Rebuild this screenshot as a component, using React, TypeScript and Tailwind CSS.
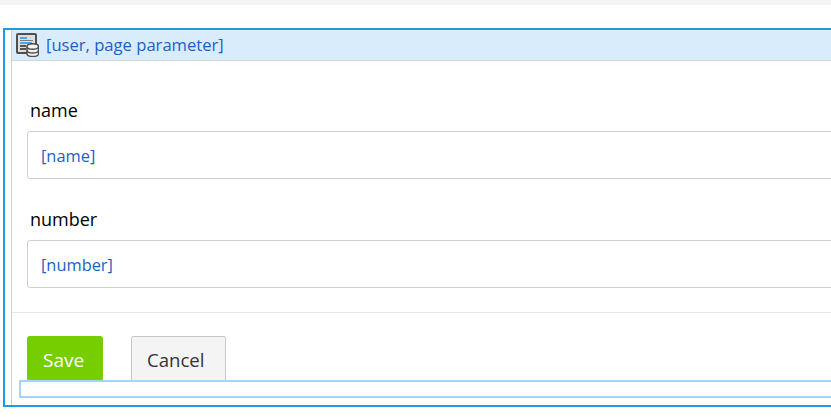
const font = "font-['Open_Sans','Noto_Sans',sans-serif]";

function FormIcon() {
  return (
    <svg width="23" height="24" viewBox="0 0 23 24" className="shrink-0">
      <rect x="1" y="1" width="19" height="19" rx="1" fill="#dedede" stroke="#505050" strokeWidth="2" />
      <rect x="4" y="4" width="7" height="2" fill="#4aa8ee" />
      <rect x="4" y="7" width="13" height="1" fill="#7d7d7d" />
      <rect x="4" y="9" width="12" height="2" fill="#4aa8ee" />
      <rect x="4" y="12" width="6" height="2" fill="#555" />
      <rect x="4" y="15" width="6" height="2" fill="#555" />
      <path d="M11 13.500c0-1.600 2.500-2.800 5.750-2.800s5.750 1.200 5.750 2.800v7.200c0 1.600-2.500 2.800-5.750 2.800s-5.750-1.200-5.750-2.800z" fill="#f4f4f4" stroke="#4d4d4d" strokeWidth="1.400" />
      <path d="M11 13.500c0 1.600 2.500 2.800 5.750 2.800s5.750-1.200 5.750-2.800" fill="none" stroke="#4d4d4d" strokeWidth="1.400" />
      <path d="M11 17.200c0 1.600 2.500 2.800 5.750 2.800s5.750-1.200 5.750-2.800" fill="none" stroke="#4d4d4d" strokeWidth="1.400" />
    </svg>
  );
}

function Field({ label, value }: { label: string; value: string }) {
  return (
    <div>
      <div className="text-[18px] leading-6 text-black mb-[9px] pl-[3px]">{label}</div>
      <div className="h-[48px] border border-[#d0d0d0] rounded-[3px] flex items-center pl-[13px] pt-[2px] text-[16.4px] text-[#1a62c4] bg-white">
        {value}
      </div>
    </div>
  );
}

export default function App() {
  return (
    <div className={`${font} relative w-[831px] h-[417px] overflow-hidden bg-white`}>
      <div className="h-[5px] bg-[#f3f3f3]" />
      <div className="relative ml-[3px] mt-[23px] w-[900px] h-[379px] border-2 border-[#1e9be8] border-r-0 pl-[6px]">
        <div className="h-full border-l border-[#cfcfcf] relative">
          <div className="h-[31px] bg-[#d9ecfb] border-b border-[#d2d6da] flex items-center gap-[7px] pl-[4px] text-[16.6px] text-[#1a62c4]">
            <FormIcon />
            <span>[user, page parameter]</span>
          </div>
          <div className="pl-[15px] pt-[37px] flex flex-col gap-[28px] h-[252px] border-b border-[#e6e6e6]">
            <Field label="name" value="[name]" />
            <Field label="number" value="[number]" />
          </div>
          <div className="pl-[15px] pt-[23px] flex gap-[28px]">
            <button className="w-[76px] h-[45px] rounded-[3px] bg-[#76cd00] text-white text-[19px] text-left pl-[16px] pt-[3px]">Save</button>
            <button className="w-[95px] h-[45px] rounded-[2px] bg-[#f4f4f4] border border-[#c8c8c8] text-[#333] text-[18.600px] text-left pl-[15px] pt-[2px]">Cancel</button>
          </div>
        </div>
        <div className="absolute left-[14px] top-[350px] right-0 h-[18px] border-2 border-[#a5d6fa] bg-transparent" />
      </div>
    </div>
  );
}
